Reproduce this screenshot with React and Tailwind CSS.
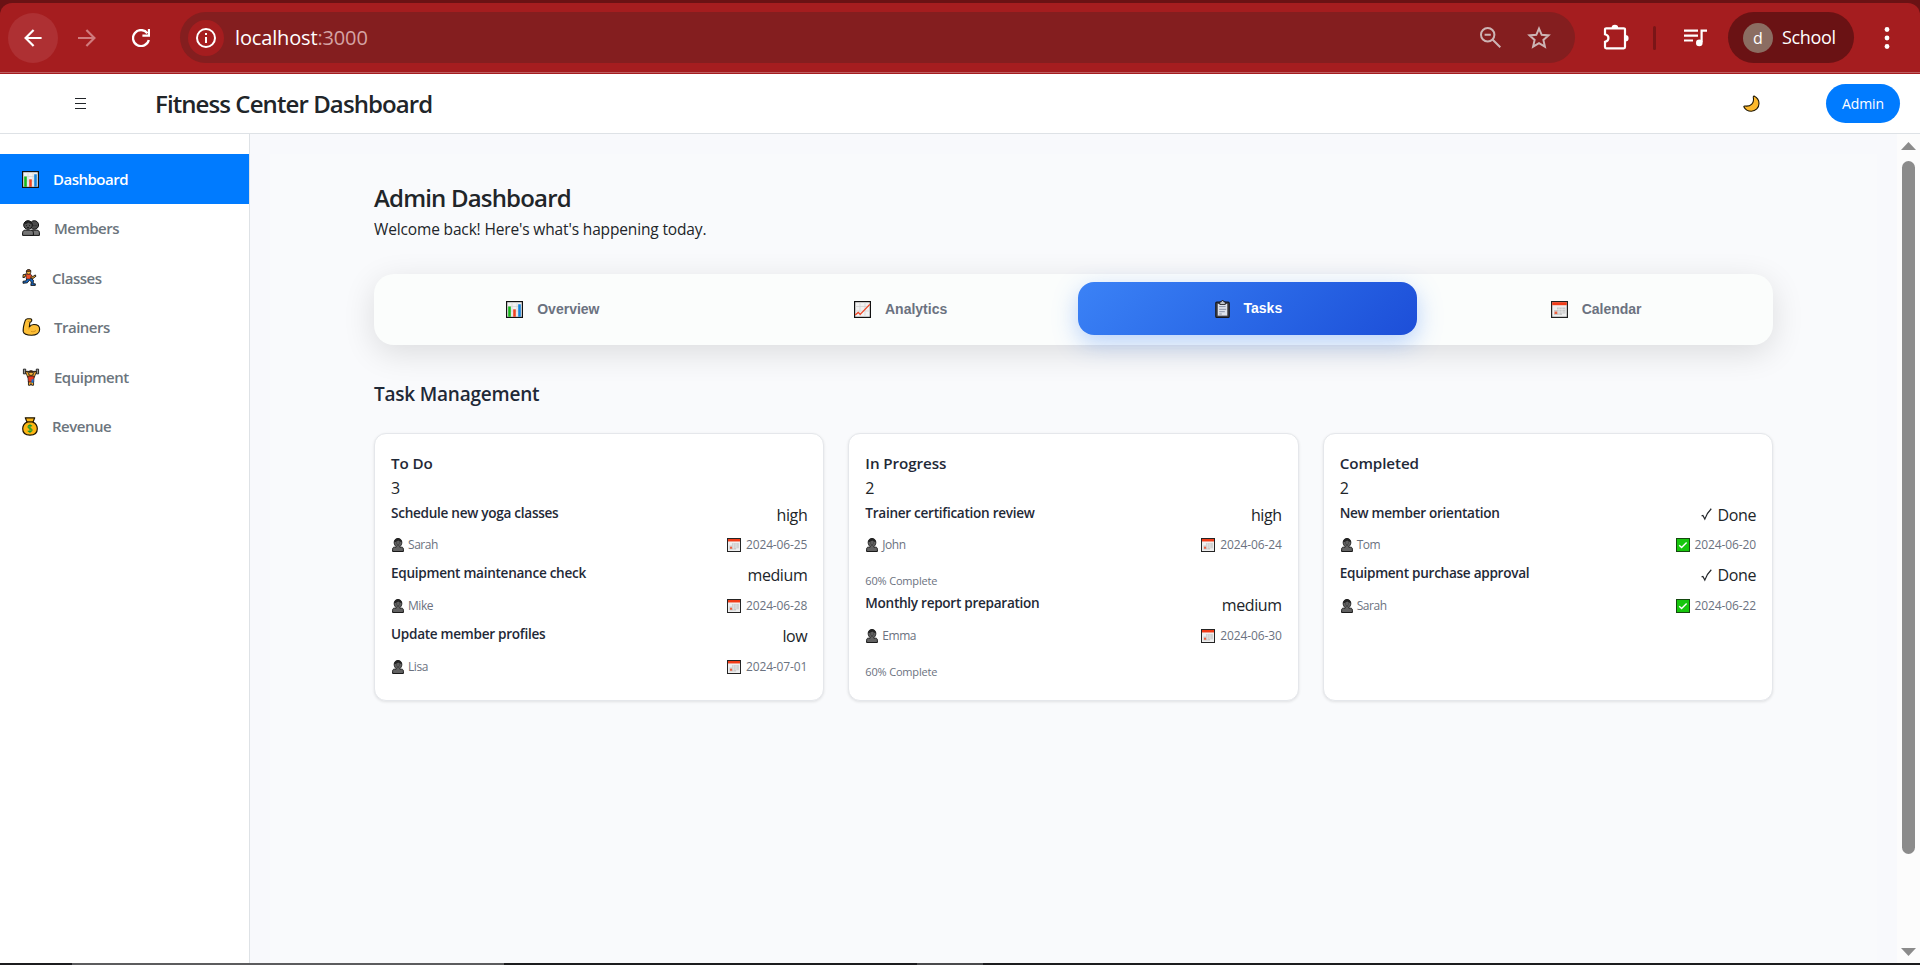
import React from "react";

const INK = "text-[#212529]";

function ChartIcon({ className }) {
  return (
    <svg viewBox="0 0 17 17" className={className}>
      <rect x="0.6" y="0.6" width="15.8" height="15.8" fill="#f1f1f1" stroke="#111" strokeWidth="1.2" />
      <path d="M1.2 5.5h14.6M1.2 10h14.6M6 1.2v14.6M11 1.2v14.6" stroke="#d4d4d4" strokeWidth="0.7" />
      <path d="M2.2 5.5h2.6v10.3H2.2z" fill="#16b81a" />
      <path d="M7.2 8.3h2.6v7.5H7.2z" fill="#ef4423" />
      <path d="M12.2 3.2h2.6v12.6h-2.6z" fill="#1583dd" />
    </svg>
  );
}

function TrendIcon({ className }) {
  return (
    <svg viewBox="0 0 17 17" className={className}>
      <rect x="0.6" y="0.6" width="15.8" height="15.8" fill="#f1f1f1" stroke="#111" strokeWidth="1.2" />
      <path d="M1.2 5.5h14.6M1.2 10h14.6M6 1.2v14.6M11 1.2v14.6" stroke="#d0d0d0" strokeWidth="0.7" />
      <path d="M1.2 14l3-2.6 2 2L15.8 3.4" fill="none" stroke="#ef4423" strokeWidth="1.3" />
    </svg>
  );
}

function ClipboardIcon({ className }) {
  return (
    <svg viewBox="0 0 15 18" className={className}>
      <rect x="0.8" y="2.2" width="13.4" height="15.2" rx="1" fill="#4a4a50" stroke="#17171b" strokeWidth="1.2" />
      <path d="M2.8 4h9.4v11.6H2.8z" fill="#dfe3ec" />
      <path d="M4.8 1.9h1.4l.7-1.4h1.4l.6 1.4h1.4v2.6H4.8z" fill="#bfc3cb" stroke="#17171b" strokeWidth="0.8" />
      <path d="M4.2 6.6h6.4M4.2 9.3h7M4.2 11.7h5.6M4.2 14h2.6" stroke="#8a93a8" strokeWidth="1" />
    </svg>
  );
}

function CalendarIcon({ className }) {
  return (
    <svg viewBox="0 0 17 17" className={className}>
      <rect x="0.6" y="0.6" width="15.8" height="15.8" fill="#efefef" stroke="#222" strokeWidth="1.2" />
      <path d="M1.2 1.2h14.6v3H1.2z" fill="#f23c18" />
      <path d="M6 6.4h8.4v6H6zM3 9h3v5H3zM6 12.4h5v1.6H6z" fill="#c9c9c9" />
      <path d="M6 8.5h8.4M3 11h11.4M8 6.4v7.4M11 6.4v6" stroke="#efefef" strokeWidth="0.6" />
      <path d="M3.6 10.6h2.6v2.4H3.6z" fill="#f0603f" />
    </svg>
  );
}

function PersonIcon({ className }) {
  return (
    <svg viewBox="0 0 12 14" className={className}>
      <path d="M6 .5C3.600.5 2.200 2 2.200 4.300c0 2 .8 3.300 1.900 4.200v.7H2.300C1 9.200.6 10.200.6 11.200v2.300h10.800v-2.300c0-1-.4-2-1.700-2H7.900v-.7c1.100-.9 1.900-2.200 1.900-4.200C9.800 2 8.400.5 6 .5z" fill="#626262" stroke="#191919" strokeWidth="1" />
      <path d="M2.500 4C2.500 1.800 4 .6 6 .6S9.500 1.800 9.500 4C8 3.600 7 3.200 6.300 2.400 5.500 3.300 4 3.800 2.500 4z" fill="#242424" />
      <path d="M4.200 5h.9M6.900 5h.9M4.800 7h2.400" stroke="#1b1b1b" strokeWidth="0.7" />
    </svg>
  );
}

function MembersIcon({ className }) {
  return (
    <svg viewBox="0 0 18 16" className={className}>
      <circle cx="12.300" cy="5" r="4.300" fill="#4b4b4b" stroke="#111" strokeWidth="1" />
      <path d="M8 15.400v-2.600c0-1.600 1-2.600 2.600-2.600h4.200c1.600 0 2.600 1 2.600 2.600v2.600z" fill="#757575" stroke="#111" strokeWidth="1" />
      <circle cx="6" cy="5" r="4.300" fill="#555" stroke="#111" strokeWidth="1" />
      <path d="M1.900 4.300C2 2 3.700.8 6 .8s4 1.200 4.100 3.500C8.300 4 7 3.400 6.200 2.500 5.300 3.500 3.700 4.100 1.900 4.300z" fill="#222" />
      <path d="M.6 15.400v-2.600c0-1.600 1-2.600 2.600-2.600h5.600c1.600 0 2.600 1 2.600 2.600v2.600z" fill="#757575" stroke="#111" strokeWidth="1" />
      <path d="M4 5.600h1M7 5.600h1M5 7.500h2M11.500 5.600h.8M13.600 5.600h.8" stroke="#111" strokeWidth="0.8" />
    </svg>
  );
}

function RunnerIcon({ className }) {
  return (
    <svg viewBox="0 0 15 17" className={className}>
      <path d="M4.800 9.600L4 11.900 1 12.300v2l4.300-.5 2.100-2.600 2 1.600-.6 3.600h4.500v-1.600h-2.200l.3-3.600-3.300-2.600z" fill="#1669c9" stroke="#111" strokeWidth="0.900" strokeLinejoin="round" />
      <path d="M4 5.200l-2.800.4L.9 8.500h1.700l.4-1.500 1.500-.2M8.700 6.300l2.200 1.200 2.400-1.600.7 1.300-3 2.300-2.800-1z" fill="#f7a52b" stroke="#111" strokeWidth="0.9" strokeLinejoin="round" />
      <path d="M3.800 4.800h4.600l1 1.500-.9 3.800H4.300z" fill="#f0502c" stroke="#111" strokeWidth="0.600" />
      <circle cx="6.600" cy="3" r="2.300" fill="#f7b03c" stroke="#111" strokeWidth="0.7" />
      <path d="M4.300 2.800C4.300 1.200 5.400.5 6.700.5s2.200.7 2.200 1.700z" fill="#8c4a1c" stroke="#111" strokeWidth="0.6" />
    </svg>
  );
}

function ArmIcon({ className }) {
  return (
    <svg viewBox="0 0 19 19" className={className}>
      <path d="M2.600 3.300C3 1.900 4 .8 5.400.8h2.900c1.400 0 1.700 1.300 1.300 2.300-.3.900-1.100 1.500-1.800 1.700L7.200 9.500c1.100-1.700 2.700-2.600 4.800-2.600 3.600 0 6.100 1.700 6.100 5 0 4-3.700 6.300-8.500 6.300-4 0-8.200-.8-8.800-3.800C.4 11 1.400 7 2.600 3.300z" fill="#fdbf37" stroke="#1a1405" strokeWidth="1.200" strokeLinejoin="round" />
      <path d="M5.600 3.800l2-.3M7.200 9.500l-.6 2.500M9 14.200c2 .6 4 .2 5.200-1" fill="none" stroke="#c98516" strokeWidth="0.800" />
    </svg>
  );
}

function LifterIcon({ className }) {
  return (
    <svg viewBox="0 0 18 19" className={className}>
      <path d="M2 3.600h14" stroke="#222" strokeWidth="1.100" />
      <path d="M1 1.200h2.400v5H1zM14.600 1.200H17v5h-2.400z" fill="#9a9a9a" stroke="#111" strokeWidth="0.900" />
      <path d="M3.200 4l1.900-.5 2.100 4h3.600l2.100-4 1.900.5-2.400 6H5.600z" fill="#f9ab2f" stroke="#111" strokeWidth="0.800" />
      <path d="M6.300 13.800h5.400v4.400H9.700l-.7-1.700-.7 1.700h-2z" fill="#f9ab2f" stroke="#111" strokeWidth="0.900" />
      <path d="M5.600 8.500h6.800l-.6 6.300H6.200z" fill="#e8391f" stroke="#111" strokeWidth="0.700" />
      <path d="M9.500 12h2.300l-.2 3.500-2.100.2z" fill="#1a73d0" />
      <circle cx="9" cy="5.500" r="2.400" fill="#f9b33a" stroke="#111" strokeWidth="0.700" />
      <path d="M6.300 4.900C6.400 3 7.600 2.300 9 2.300s2.600.7 2.700 2.600z" fill="#3a2415" />
    </svg>
  );
}

function MoneyIcon({ className }) {
  return (
    <svg viewBox="0 0 16 19" className={className}>
      <path d="M3.300.8h9.400l-1.700 4.300c2.700 1.300 4.300 3.600 4.300 6.700 0 4.200-2.900 6.400-7.300 6.400S.7 16 .7 11.800C.7 8.700 2.300 6.400 5 5.100z" fill="#fcb514" stroke="#1d1503" strokeWidth="1.200" strokeLinejoin="round" />
      <path d="M4.800 4.900h6.400" stroke="#1d1503" strokeWidth="1.200" />
      <path d="M10 9.300C9.500 8.600 8.800 8.400 8 8.400c-1.200 0-2 .6-2 1.500 0 2.200 4.100 1 4.100 3.200 0 1-.9 1.600-2.100 1.600-.9 0-1.700-.3-2.200-1M8 7.200v8.700" fill="none" stroke="#179b2a" strokeWidth="1.100" />
    </svg>
  );
}

function CheckIcon({ className }) {
  return (
    <svg viewBox="0 0 14 14" className={className}>
      <rect x="0.500" y="0.500" width="13" height="13" fill="#16c60c" stroke="#14480f" strokeWidth="1" />
      <path d="M3.200 7.300l2.400 2.300 5-5" fill="none" stroke="#fff" strokeWidth="1.400" />
    </svg>
  );
}

function TickIcon({ className }) {
  return (
    <svg viewBox="0 0 11 13" className={className}>
      <path d="M.6 7.900l1.300-.5 1.900 3.700C5.300 6.900 7.300 3.500 10.300.7" fill="none" stroke="#212529" strokeWidth="1.200" />
    </svg>
  );
}

function MoonIcon({ className }) {
  return (
    <svg viewBox="0 0 17 17" className={className}>
      <path d="M11 .9c3.400 1.600 5 4.500 5 7.600 0 4.300-3.400 7.700-7.700 7.700-3.300 0-6-1.500-7.500-4.500.2-.6.8-.8 1.400-.7 5.500.6 9.300-2.800 8.100-8.800-.1-.6.200-1.100.7-1.300z" fill="#fdb92c" stroke="#1d1503" strokeWidth="1.100" strokeLinejoin="round" />
    </svg>
  );
}

function BrowserBar() {
  return (
    <div className="bg-[#6a1214] pt-[3px]">
      <div className="flex h-[69px] items-center rounded-t-[12px] bg-[#a51d1f]">
        <div className="ml-2 flex size-[50px] items-center justify-center rounded-full bg-[#ae3033]">
          <svg viewBox="0 0 18 18" className="size-[18px]" fill="none" stroke="#fff" strokeWidth="2.200">
            <path d="M17.600 9H1.800M9.600 1L1.600 9l8 8" />
          </svg>
        </div>
        <svg viewBox="0 0 18 18" className="ml-5 size-[18px]" fill="none" stroke="#d07b7d" strokeWidth="2.200">
          <path d="M0 9h16M8.400 1l8 8-8 8" />
        </svg>
        <svg viewBox="0 0 18 18" className="ml-9 size-[18px]" fill="none" stroke="#fff" strokeWidth="2.300">
          <path d="M15.400 4.200A8 8 0 1 0 16.800 11M17 0v6.600h-6.600" />
        </svg>
        <div className="ml-[30px] flex h-[51px] w-[1395px] items-center rounded-full bg-[#841e1f] pl-[8px]">
          <div className="flex size-9 items-center justify-center rounded-full bg-[#a51d1f]">
            <svg viewBox="0 0 20 20" className="size-5" fill="none" stroke="#fff" strokeWidth="2">
              <circle cx="10" cy="10" r="9" />
              <path d="M10 9v6M10 5v2" />
            </svg>
          </div>
          <span className="ml-[11px] text-[20px] tracking-[-0.150px] text-white">
            localhost<span className="text-[#d5a3a4]">:3000</span>
          </span>
          <svg viewBox="0 0 21 21" className="ml-auto size-[21px]" fill="none" stroke="#cdb4b4" strokeWidth="2">
            <circle cx="7.700" cy="7.700" r="6.700" />
            <path d="M12.500 12.500l7.800 7.800M4.600 7.700h6.200" />
          </svg>
          <svg viewBox="0 0 24 23" className="mr-[24px] ml-[26px] h-[23px] w-6" fill="none" stroke="#cdb4b4" strokeWidth="2">
            <path d="M12 2.600l2.700 6.200 6.800.6-5.100 4.500 1.500 6.700L12 17.100l-5.900 3.500 1.500-6.700-5.100-4.500 6.800-.6z" />
          </svg>
        </div>
        <svg viewBox="0 0 26 26" className="ml-[28px] size-[26px] -translate-y-[1px]">
          <path d="M3.200 4.300h17.600a1.200 1.200 0 0 1 1.200 1.200v17.600a1.200 1.200 0 0 1-1.200 1.200H3.200A1.200 1.200 0 0 1 2 23.100v-5.200c4.600-1 4.600-6.600 0-7.600V5.500a1.200 1.200 0 0 1 1.200-1.200z" fill="none" stroke="#fff" strokeWidth="2.200" />
          <path d="M8.600 4a3.300 3.300 0 0 1 6.600 0zM22.300 11a3.300 3.300 0 0 1 0 6.600z" fill="#fff" />
        </svg>
        <div className="ml-[24px] h-6 w-[3px] rounded bg-[#7a1517]" />
        <svg viewBox="0 0 24 18" className="ml-[28px] h-[18px] w-6" fill="none" stroke="#fff" strokeWidth="2.200">
          <path d="M0 1.700h14M0 6.600h14M0 11.500h9" />
          <path d="M23 1.700h-5.400v11.500" />
          <circle cx="15.300" cy="13.900" r="3.300" fill="#fff" stroke="none" />
        </svg>
        <div className="ml-5 flex h-[51px] w-[126px] items-center rounded-full bg-[#6a1214] pl-[15px]">
          <span className="flex size-[30px] items-center justify-center rounded-full bg-[#8b6d62] text-[16px] text-white">d</span>
          <span className="ml-[9px] text-[18px] tracking-[-0.350px] text-white">School</span>
        </div>
        <svg viewBox="0 0 6 22" className="ml-[30px] h-[22px] w-[6px]" fill="#fff">
          <circle cx="3" cy="2.500" r="2.400" />
          <circle cx="3" cy="11" r="2.400" />
          <circle cx="3" cy="19.500" r="2.400" />
        </svg>
      </div>
      <div className="h-px bg-[#bd5f61]" />
      <div className="h-px bg-[#a51d1f]" />
    </div>
  );
}

function Header() {
  return (
    <header className="flex h-[60px] items-center border-b border-[#dee2e6] bg-white pr-5 pl-[75px]">
      <svg viewBox="0 0 11 11" className="h-[11px] w-[11px] overflow-visible" stroke="#212529" strokeWidth="1">
        <path d="M0 .5h11M0 5.500h11M0 10.500h11" />
      </svg>
      <h1 className={`ml-[69px] text-[24px] font-semibold tracking-[-0.910px] ${INK}`}>Fitness Center Dashboard</h1>
      <MoonIcon className="ml-auto size-[17px]" />
      <div className="ml-[66px] flex h-[39px] w-[74px] items-center justify-center rounded-full bg-[#007bff] text-[14px] tracking-[-0.100px] text-white">
        Admin
      </div>
    </header>
  );
}

const NAV = [
  { label: "Dashboard", icon: <ChartIcon className="size-[17px]" />, gap: "gap-[14px]" },
  { label: "Members", icon: <MembersIcon className="h-[16px] w-[18px]" />, gap: "gap-[14px]" },
  { label: "Classes", icon: <RunnerIcon className="h-[17px] w-[15px]" />, gap: "gap-[15px]" },
  { label: "Trainers", icon: <ArmIcon className="h-[18px] w-[19px]" />, gap: "gap-[13px]" },
  { label: "Equipment", icon: <LifterIcon className="h-[18px] w-[18px]" />, gap: "gap-[14px]" },
  { label: "Revenue", icon: <MoneyIcon className="h-[19px] w-[16px]" />, gap: "gap-[14px]" },
];

function Sidebar() {
  return (
    <nav className="w-[250px] shrink-0 border-r border-[#dee2e6] bg-white pt-5">
      {NAV.map((item, i) => (
        <div
          key={item.label}
          className={`flex items-center pl-[22px] text-[15px] font-semibold tracking-[-0.500px] ${item.gap} ${
            i === 0 ? "h-[50px] bg-[#007bff] text-white" : "h-[49.600px] pb-px text-[#6c757d]"
          }`}
        >
          {item.icon}
          <span>{item.label}</span>
        </div>
      ))}
    </nav>
  );
}

const TABS = [
  { label: "Overview", icon: <ChartIcon className="size-[17px]" /> },
  { label: "Analytics", icon: <TrendIcon className="size-[17px]" /> },
  { label: "Tasks", icon: <ClipboardIcon className="h-[18px] w-[15px]" />, active: true },
  { label: "Calendar", icon: <CalendarIcon className="size-[17px]" /> },
];

function Tabs() {
  return (
    <div className="mt-[30px] grid h-[71px] grid-cols-4 gap-2 rounded-[20px] bg-[#fbfdfc] px-2 pt-2 shadow-[0_8px_32px_rgba(0,0,0,0.120)]">
      {TABS.map((tab) => (
        <div
          key={tab.label}
          className={`flex items-center justify-center gap-[14px] rounded-[16px] pl-[2px] font-['Liberation_Sans',sans-serif] text-[14px] font-bold ${
            tab.active
              ? "h-[53px] bg-linear-135 from-[#3b82f6] to-[#1d4ed8] text-white shadow-[0_8px_25px_rgba(59,130,246,0.350)]"
              : "h-[55px] text-[#6b7280]"
          }`}
        >
          {tab.icon}
          <span>{tab.label}</span>
        </div>
      ))}
    </div>
  );
}

const COLUMNS = [
  {
    title: "To Do",
    count: 3,
    tasks: [
      { name: "Schedule new yoga classes", tag: "high", who: "Sarah", date: "2024-06-25" },
      { name: "Equipment maintenance check", tag: "medium", who: "Mike", date: "2024-06-28" },
      { name: "Update member profiles", tag: "low", who: "Lisa", date: "2024-07-01" },
    ],
  },
  {
    title: "In Progress",
    count: 2,
    tasks: [
      { name: "Trainer certification review", tag: "high", who: "John", date: "2024-06-24", progress: 60 },
      { name: "Monthly report preparation", tag: "medium", who: "Emma", date: "2024-06-30", progress: 60 },
    ],
  },
  {
    title: "Completed",
    count: 2,
    tasks: [
      { name: "New member orientation", tag: "Done", who: "Tom", date: "2024-06-20", done: true },
      { name: "Equipment purchase approval", tag: "Done", who: "Sarah", date: "2024-06-22", done: true },
    ],
  },
];

function Task({ task }) {
  return (
    <div>
      <div className="flex h-[34.500px] items-start justify-between">
        <span className="text-[13.600px] leading-[21px] font-semibold tracking-[-0.290px] text-[#1f2937]">{task.name}</span>
        <span className={`flex items-center gap-[6px] text-[16px] leading-[26px] tracking-[-0.400px] ${INK}`}>
          {task.done && <TickIcon className="h-[13px] w-[11px]" />}
          {task.tag}
        </span>
      </div>
      <div className="flex h-[26.300px] items-start justify-between text-[12px] leading-[18px] text-[#6b7280]">
        <span className="flex items-center gap-[4px] pl-px tracking-[-0.450px]">
          <PersonIcon className="h-[14px] w-[12px]" />
          {task.who}
        </span>
        <span className="flex items-center gap-[5px] tracking-[-0.120px]">
          {task.done ? <CheckIcon className="size-[14px]" /> : <CalendarIcon className="size-[14px]" />}
          {task.date}
        </span>
      </div>
      {task.progress && (
        <div className="h-[30px] pt-[10.500px] text-[11px] leading-[16px] tracking-[-0.180px] text-[#6b7280]">
          {task.progress}% Complete
        </div>
      )}
    </div>
  );
}

function Column({ column }) {
  return (
    <section className="h-[268px] rounded-[12px] border border-[#e5e7eb] bg-white px-4 pt-[18px] shadow-[0_1px_3px_rgba(0,0,0,0.100)]">
      <h3 className="text-[15.200px] leading-[23px] font-semibold tracking-[-0.080px] text-[#1f2937]">{column.title}</h3>
      <div className={`mb-[0.600px] text-[16px] leading-[26px] ${INK}`}>{column.count}</div>
      {column.tasks.map((task) => (
        <Task key={task.name} task={task} />
      ))}
    </section>
  );
}

function Scrollbar() {
  return (
    <div className="flex w-[23px] shrink-0 flex-col items-center bg-[#fcfcfc] pt-2 pb-[7px]">
      <svg viewBox="0 0 15 8" className="h-2 w-[15px]" fill="#8b8b8b">
        <path d="M7.500 0L15 8H0z" />
      </svg>
      <div className="mt-[11px] h-[693px] w-[13px] rounded-full bg-[#8b8b8b]" />
      <svg viewBox="0 0 15 8" className="mt-auto h-2 w-[15px]" fill="#8b8b8b">
        <path d="M7.500 8L15 0H0z" />
      </svg>
    </div>
  );
}

export default function App() {
  return (
    <div className="flex h-[965px] w-[1920px] flex-col overflow-hidden bg-white font-['Open_Sans',sans-serif]">
      <BrowserBar />
      <Header />
      <div className="flex min-h-0 flex-1">
        <Sidebar />
        <main className="flex-1 overflow-hidden bg-[#f8f9fc] px-5 pt-5">
          <div className="h-full bg-[#f9fafc] px-[104px] pt-[28px]">
            <h2 className={`text-[24px] leading-[32px] font-semibold tracking-[-0.820px] ${INK}`}>Admin Dashboard</h2>
            <p className={`text-[15.500px] leading-[30px] tracking-[-0.150px] ${INK}`}>
              Welcome back! Here's what's happening today.
            </p>
            <Tabs />
            <h2 className="mt-[34px] mb-[24px] text-[19px] leading-[30px] font-semibold tracking-[-0.220px] text-[#1f2937]">
              Task Management
            </h2>
            <div className="grid grid-cols-3 gap-6">
              {COLUMNS.map((c) => (
                <Column key={c.title} column={c} />
              ))}
            </div>
          </div>
        </main>
        <Scrollbar />
      </div>
      <div className="flex h-[2px] shrink-0 bg-[#1c1c1e]">
        <div className="ml-[72px] w-[432px] bg-[#5c5c5e]" />
        <div className="ml-[413px] w-[66px] bg-[#4a4a4c]" />
      </div>
    </div>
  );
}
